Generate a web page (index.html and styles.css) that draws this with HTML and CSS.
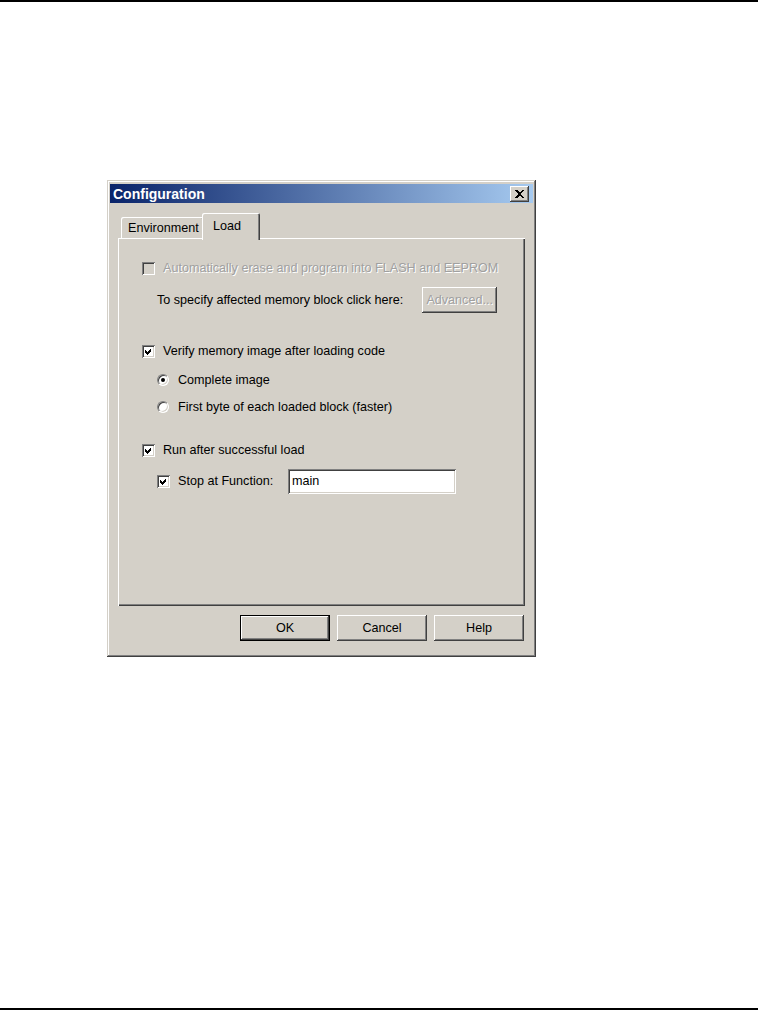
FILE: index.html
```html
<!DOCTYPE html>
<html lang="en">
<head>
  <meta charset="UTF-8">
  <title>Configuration</title>
  <link rel="stylesheet" href="styles.css">
</head>
<body>
<div class="page">
  <div class="dialog">
    <div class="titlebar">
      <span class="title">Configuration</span>
      <span class="close">
        <svg width="9" height="8" viewBox="0 0 9 8" shape-rendering="crispEdges"><path d="M0 0h2l2.5 2.5L7 0h2L5.5 4 9 8H7L4.5 5.5 2 8H0l3.5-4z" fill="#000"/></svg>
      </span>
    </div>
    <div class="body">
      <div class="tabs">
        <div class="tab">Environment</div>
        <div class="tab active">Load</div>
      </div>
      <div class="panel">
        <div class="row r1">
          <span class="check disabled"></span>
          <span class="label grey">Automatically erase and program into FLASH and EEPROM</span>
        </div>
        <div class="row r2 indent">
          <span class="label">To specify affected memory block click here:</span>
          <span class="btn small grey">Advanced...</span>
        </div>
        <div class="row r3">
          <span class="check on"><svg width="13" height="13" viewBox="0 0 13 13" shape-rendering="crispEdges"><path d="M3 5l2 2 4-4v3l-4 4-2-2z" fill="#000"/></svg></span>
          <span class="label">Verify memory image after loading code</span>
        </div>
        <div class="row r4 indent">
          <span class="radio on"></span>
          <span class="label">Complete image</span>
        </div>
        <div class="row r5 indent">
          <span class="radio"></span>
          <span class="label">First byte of each loaded block (faster)</span>
        </div>
        <div class="row r6">
          <span class="check on"><svg width="13" height="13" viewBox="0 0 13 13" shape-rendering="crispEdges"><path d="M3 5l2 2 4-4v3l-4 4-2-2z" fill="#000"/></svg></span>
          <span class="label">Run after successful load</span>
        </div>
        <div class="row r7 indent">
          <span class="check on"><svg width="13" height="13" viewBox="0 0 13 13" shape-rendering="crispEdges"><path d="M3 5l2 2 4-4v3l-4 4-2-2z" fill="#000"/></svg></span>
          <span class="label fn">Stop at Function:</span>
          <span class="field">main</span>
        </div>
      </div>
      <div class="buttons">
        <span class="btn default">OK</span>
        <span class="btn">Cancel</span>
        <span class="btn">Help</span>
      </div>
    </div>
  </div>
</div>
</body>
</html>
```

FILE: styles.css
```css
*{
  margin: 0;
  padding: 0;
  box-sizing: border-box;
}
body{
  background: #fff;
  font-family: "Liberation Sans", Arial, sans-serif;
  font-size: 12.6px;
  color: #000;
}
.page{
  height: 1010px;
  border-top: 2px solid #000;
  border-bottom: 2px solid #000;
  padding: 178px 0 0 107px;
}
/*窗口外框*/
.dialog{
  width: 429px;
  height: 477px;
  background: #d4d0c8;
  padding: 4px 3px 3px;
  box-shadow: inset -1px -1px #404040, inset 1px 1px #d4d0c8, inset -2px -2px #808080, inset 2px 2px #fff;
}
.titlebar{
  height: 19px;
  display: flex;
  align-items: center;
  justify-content: space-between;
  padding: 0 4px 0 3px;
  background: linear-gradient(to right, #0a246a, #a6caf0);
}
.title{
  color: #fff;
  font-weight: bold;
  font-size: 14px;
}
.close{
  width: 19px;
  height: 16px;
  display: flex;
  align-items: center;
  justify-content: center;
  background: #d4d0c8;
  box-shadow: inset -1px -1px #404040, inset 1px 1px #fff, inset -2px -2px #808080;
}
.body{
  display: flex;
  flex-direction: column;
  padding: 10px 8px 0 8px;
}
/*标签页*/
.tabs{
  display: flex;
  align-items: flex-end;
  height: 25px;
  padding-left: 3px;
  z-index: 1;
}
.tab{
  height: 21px;
  width: 83px;
  padding: 4px 0 0 7px;
  box-shadow: inset 1px 1px #fff, inset -1px 0 #404040, inset -2px 0 #808080;
  border-radius: 2px 2px 0 0;
}
.tab.active{
  width: 58px;
  height: 27px;
  margin: 0 0 -2px -2px;
  padding: 6px 0 0 11px;
  background: #d4d0c8;
}
.panel{
  height: 368px;
  padding: 21px 0 0 24px;
  box-shadow: inset 1px 1px #fff, inset -1px -1px #404040, inset -2px -2px #808080;
}
.row{
  display: flex;
  align-items: center;
  height: 18px;
}
.indent{
  padding-left: 15px;
}
.r2{ height: 26px; margin-top: 10px; }
.r3{ margin-top: 29px; }
.r4{ margin-top: 11px; }
.r5{ margin-top: 9px; }
.r6{ margin-top: 25px; }
.r7{ height: 26px; margin-top: 9px; }
.label{
  white-space: nowrap;
}
.label.fn{
  width: 110px;
}
.grey{
  color: #a0a0a0;
  text-shadow: 1px 1px #fff;
}
/*复选框和单选框*/
.check{
  width: 13px;
  height: 13px;
  flex: none;
  margin-right: 8px;
  background: #fff;
  box-shadow: inset 1px 1px #808080, inset -1px -1px #fff, inset 2px 2px #404040, inset -2px -2px #d4d0c8;
}
.check svg{
  display: block;
}
.check.disabled{
  background: #d4d0c8;
}
.radio{
  width: 12px;
  height: 12px;
  flex: none;
  margin-right: 9px;
  border-radius: 50%;
  background: #fff;
  border: 1px solid;
  border-color: #808080 #fff #fff #808080;
  box-shadow: inset 1px 1px #404040, inset -1px -1px #d4d0c8;
  display: flex;
  align-items: center;
  justify-content: center;
}
.radio.on::after{
  content: "";
  width: 4px;
  height: 4px;
  border-radius: 50%;
  background: #000;
}
.field{
  width: 168px;
  height: 25px;
  padding: 5px 0 0 4px;
  background: #fff;
  box-shadow: inset 1px 1px #808080, inset -1px -1px #fff, inset 2px 2px #404040, inset -2px -2px #d4d0c8;
}
/*按钮*/
.buttons{
  display: flex;
  justify-content: flex-end;
  gap: 7px;
  margin-top: 9px;
  padding-right: 1px;
}
.btn{
  width: 90px;
  height: 26px;
  display: flex;
  align-items: center;
  justify-content: center;
  background: #d4d0c8;
  box-shadow: inset -1px -1px #404040, inset 1px 1px #fff, inset -2px -2px #808080;
}
.btn.default{
  box-shadow: inset 0 0 0 1px #000, inset -2px -2px #404040, inset 2px 2px #fff, inset -3px -3px #808080;
}
.btn.small{
  width: 75px;
  margin-left: 19px;
}
```
